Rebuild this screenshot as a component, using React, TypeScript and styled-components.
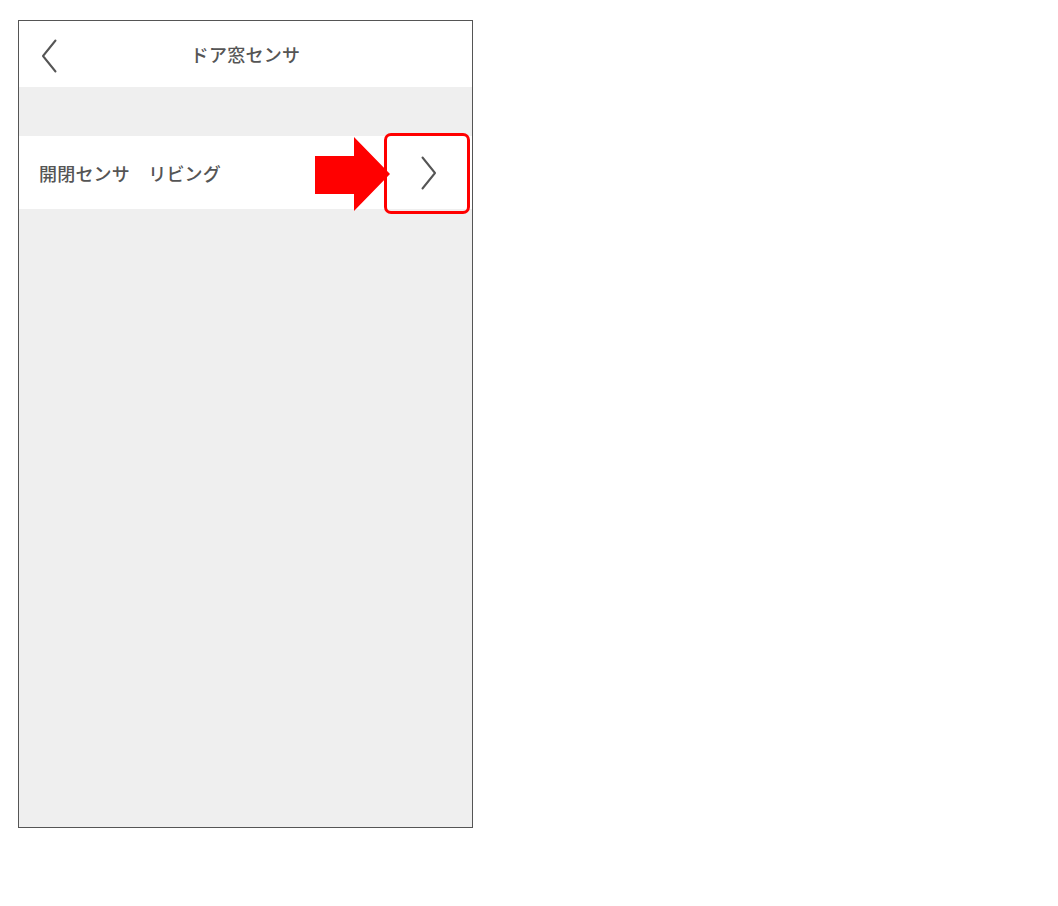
import styled, { createGlobalStyle } from 'styled-components'

const GlobalStyle = createGlobalStyle`
  html, body {
    margin: 0;
    padding: 0;
    background: #fff;
  }
  body {
    font-family: 'Noto Sans CJK JP', 'Noto Sans', sans-serif;
  }
`

const Page = styled.div`
  padding: 20px 0 0 18px;
`

const Phone = styled.div`
  width: 453px;
  height: 806px;
  border: 1px solid #555;
  background: #efefef;
  display: flex;
  flex-direction: column;
`

const Header = styled.header`
  position: relative;
  height: 66px;
  background: #fff;
  display: flex;
  align-items: center;
  justify-content: center;
`

const BackButton = styled.button`
  position: absolute;
  left: 22px;
  top: 18px;
  border: none;
  background: none;
  padding: 0;
  display: flex;
`

const Title = styled.h1`
  margin: 0;
  font-size: 18px;
  font-weight: 500;
  color: #555;
  letter-spacing: 0.3px;
`

const Spacer = styled.div`
  height: 49px;
`

const Row = styled.div`
  position: relative;
  height: 73px;
  background: #fff;
  display: flex;
  align-items: center;
  justify-content: space-between;
  padding: 0 35px 0 20px;
`

const Label = styled.span`
  font-size: 18px;
  font-weight: 500;
  color: #555;
  letter-spacing: 0.2px;
  white-space: pre;
`

const Chevron = styled.svg`
  display: block;
`

const Highlight = styled.div`
  position: absolute;
  left: 365px;
  top: -3px;
  width: 86px;
  height: 81px;
  box-sizing: border-box;
  border: 3px solid #ff0000;
  border-radius: 7px;
  pointer-events: none;
`

const Arrow = styled.svg`
  position: absolute;
  left: 296px;
  top: 1px;
`

const App = () => {
  return (
    <>
      <GlobalStyle />
      <Page>
        <Phone>
          <Header>
            <BackButton aria-label="back">
              <Chevron width="16" height="34" viewBox="0 0 16 34">
                <path
                  d="M14.5 1.5 L2 17 L14.5 32.5"
                  fill="none"
                  stroke="#555"
                  strokeWidth="2"
                  strokeLinecap="round"
                  strokeLinejoin="round"
                />
              </Chevron>
            </BackButton>
            <Title>ドア窓センサ</Title>
          </Header>
          <Spacer />
          <Row>
            <Label>開閉センサ　リビング</Label>
            <Chevron width="16" height="34" viewBox="0 0 16 34">
              <path
                d="M1.5 1.5 L14 17 L1.5 32.5"
                fill="none"
                stroke="#555"
                strokeWidth="2"
                strokeLinecap="round"
                strokeLinejoin="round"
              />
            </Chevron>
            <Arrow width="75" height="74" viewBox="0 0 75 74">
              <polygon points="0,19 39,19 39,0 75,37 39,74 39,57 0,57" fill="#ff0000" />
            </Arrow>
            <Highlight />
          </Row>
        </Phone>
      </Page>
    </>
  )
}

export default App
